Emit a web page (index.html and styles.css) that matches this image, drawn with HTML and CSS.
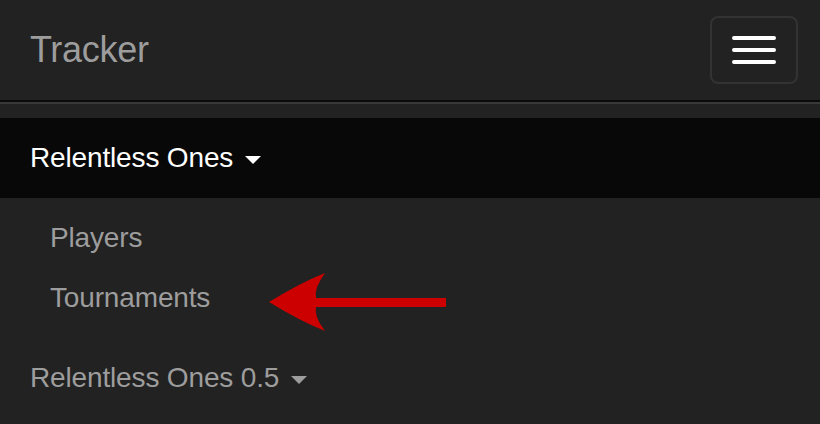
FILE: index.html
```html
<!DOCTYPE html>
<html>
<head>
<meta charset="utf-8">
<link rel="stylesheet" href="styles.css">
</head>
<body>
<nav class="navbar">
  <div class="navbar-header">
    <a class="brand" href="#">Tracker</a>
    <button class="toggle" type="button" aria-label="Toggle navigation">
      <span class="bar"></span>
      <span class="bar"></span>
      <span class="bar"></span>
    </button>
  </div>
  <div class="collapse">
    <ul class="nav">
      <li class="dropdown open">
        <a class="nav-link active" href="#">Relentless Ones <span class="caret"></span></a>
        <ul class="dropdown-menu">
          <li><a class="sub-link" href="#">Players</a></li>
          <li><a class="sub-link" href="#">Tournaments</a></li>
        </ul>
      </li>
      <li class="dropdown">
        <a class="nav-link" href="#">Relentless Ones 0.5 <span class="caret"></span></a>
      </li>
    </ul>
  </div>
</nav>
<svg class="annotation" width="820" height="424" viewBox="0 0 820 424" aria-hidden="true">
  <path d="M269,302 Q300,283 325,273 Q314,288 316,298 L446,298 L446,307 L316,307 Q314,317 325,331 Q300,321 269,302 Z" fill="#cc0000"/>
</svg>
</body>
</html>
```
FILE: styles.css
```css
html, body {
  margin: 0;
  padding: 0;
  background: #222222;
  height: 100%;
  overflow: hidden;
}
body {
  font-family: "Liberation Sans", Arial, Helvetica, sans-serif;
  position: relative;
}
a { text-decoration: none; }
ul { list-style: none; margin: 0; padding: 0; }

.navbar-header {
  height: 100px;
  display: flex;
  align-items: center;
  justify-content: space-between;
  padding: 0 22px 0 30px;
}
.brand {
  color: #9d9d9d;
  font-size: 36px;
  line-height: 40px;
  letter-spacing: -0.3px;
}
.toggle {
  box-sizing: border-box;
  width: 88px;
  height: 68px;
  padding: 18px 20px;
  background: transparent;
  border: 2px solid #333333;
  border-radius: 8px;
  display: flex;
  flex-direction: column;
  gap: 8px;
}
.bar {
  display: block;
  width: 44px;
  height: 4px;
  border-radius: 2px;
  background: #ffffff;
}

.collapse {
  border-top: 2px solid #0a0a0a;
  box-shadow: inset 0 2px 0 rgba(255, 255, 255, 0.1);
  padding-top: 16px;
}
.nav-link {
  display: block;
  padding: 20px 30px;
  font-size: 28px;
  line-height: 40px;
  letter-spacing: -0.15px;
  color: #9d9d9d;
}
.nav-link.active {
  background: #080808;
  color: #ffffff;
}
.caret {
  display: inline-block;
  width: 0;
  height: 0;
  margin-left: 4px;
  vertical-align: middle;
  border-top: 8px solid currentColor;
  border-left: 8px solid transparent;
  border-right: 8px solid transparent;
}
.dropdown-menu {
  padding: 10px 0;
}
.sub-link {
  display: block;
  padding: 10px 30px 10px 50px;
  font-size: 28px;
  line-height: 40px;
  letter-spacing: -0.15px;
  color: #9d9d9d;
}
.annotation {
  position: absolute;
  left: 0;
  top: 0;
  pointer-events: none;
}
```
